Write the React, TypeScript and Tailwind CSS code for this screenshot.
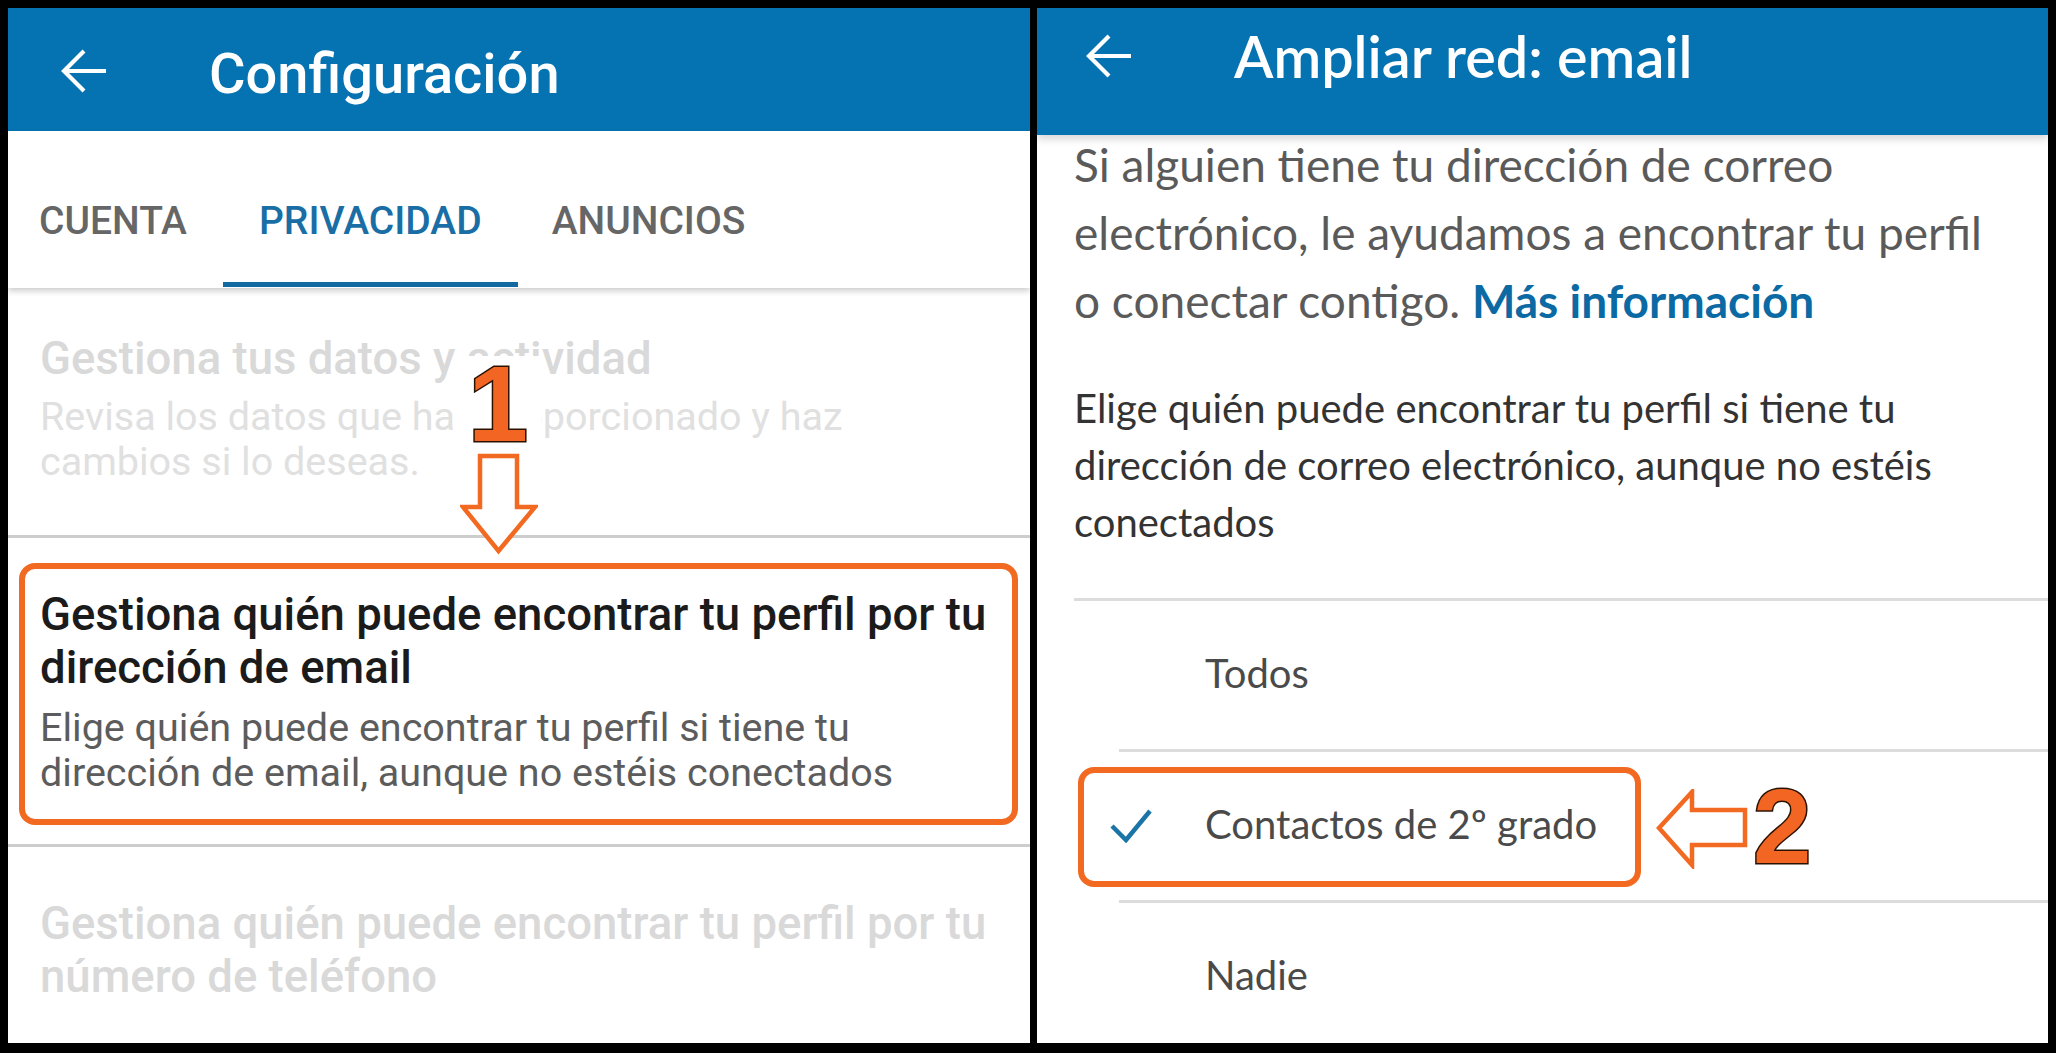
import React from "react";

const BackArrow = () => (
  <svg width="48" height="46" viewBox="0 0 48 46" fill="none" stroke="white" strokeWidth="4.2">
    <path d="M46 23H5" />
    <path d="M24 3L4 23L24 43" strokeLinejoin="miter" />
  </svg>
);

const Check = () => (
  <svg width="42" height="34" viewBox="0 0 42 34" fill="none" stroke="#1a74a8" strokeWidth="4.5" strokeLinecap="butt" strokeLinejoin="miter">
    <path d="M2 17L16 31L40 2" />
  </svg>
);

const DownArrow = () => (
  <svg width="78" height="102" viewBox="0 0 78 102">
    <path d="M20 3H57V54H75L38.5 98L3 54H20Z" fill="white" stroke="#f26a21" strokeWidth="4.5" strokeLinejoin="miter" />
  </svg>
);

const LeftArrow = () => (
  <svg width="92" height="80" viewBox="0 0 92 80">
    <path d="M3 39L36 3V21H89V56H36V76Z" fill="white" stroke="#f26a21" strokeWidth="4.5" strokeLinejoin="miter" />
  </svg>
);

function ConfigPanel() {
  return (
    <div className="w-[1022px] h-full bg-white flex flex-col overflow-hidden font-['Roboto',sans-serif]">
      <div className="h-[123px] bg-[#0573b1] flex items-start pt-[38px] pl-[52px] shrink-0">
        <div className="pt-[2px]">
          <BackArrow />
        </div>
        <span className="ml-[101px] text-[56px] leading-none font-medium text-white whitespace-nowrap">Configuración</span>
      </div>

      <div className="relative z-10 h-[157px] shrink-0 flex bg-white shadow-[0_3px_6px_rgba(0,0,0,0.2)] text-[39px] leading-none font-medium">
        <div className="h-[156px] pt-[71px] pl-[31px] pr-[36px] border-b-[5px] border-transparent text-[#666666]">CUENTA</div>
        <div className="h-[156px] pt-[71px] px-[36px] border-b-[5px] border-[#136aa3] text-[#1a6ea6]">PRIVACIDAD</div>
        <div className="h-[156px] pt-[71px] pl-[34px] border-b-[5px] border-transparent text-[#666666]">ANUNCIOS</div>
      </div>

      <div className="flex flex-col">
        <div className="pl-[32px] pt-[44px] pb-[51px]">
          <div className="text-[45.5px] leading-[53px] font-medium text-[#d9d9d9] whitespace-nowrap">Gestiona tus datos y actividad</div>
          <div className="mt-[9px] text-[39.5px] leading-[45px] text-[#e0e0e0] whitespace-nowrap">
            <div>Revisa los datos que has proporcionado y haz</div>
            <div>cambios si lo deseas.</div>
          </div>
        </div>
        <div className="h-[3px] bg-[#cdcdcd]" />
        <div className="pl-[32px] pt-[50px] pb-[49px]">
          <div className="text-[45.5px] leading-[53px] font-medium text-[#1b1b1b] whitespace-nowrap">
            <div>Gestiona quién puede encontrar tu perfil por tu</div>
            <div>dirección de email</div>
          </div>
          <div className="mt-[11px] text-[39.5px] leading-[45px] text-[#5c5c5c] whitespace-nowrap">
            <div>Elige quién puede encontrar tu perfil si tiene tu</div>
            <div>dirección de email, aunque no estéis conectados</div>
          </div>
        </div>
        <div className="h-[3px] bg-[#cdcdcd]" />
        <div className="pl-[32px] pt-[50px]">
          <div className="text-[45.5px] leading-[53px] font-medium text-[#d9d9d9] whitespace-nowrap">
            <div>Gestiona quién puede encontrar tu perfil por tu</div>
            <div>número de teléfono</div>
          </div>
        </div>
      </div>
    </div>
  );
}

function Option({ label, checked, indentLine }: { label: string; checked?: boolean; indentLine?: boolean }) {
  return (
    <div className="flex flex-col">
      <div className={indentLine ? "h-[3px] bg-[#dcdcdc] ml-[82px]" : "h-[3px] bg-[#dcdcdc] ml-[37px]"} />
      <div className="h-[148px] flex items-center pb-[4px]">
        <div className="w-[168px] pl-[73px] pt-[4px] flex items-center">{checked ? <Check /> : null}</div>
        <span className="text-[40px] leading-none text-[#4a4a4a] whitespace-nowrap">{label}</span>
      </div>
    </div>
  );
}

function EmailPanel() {
  return (
    <div className="w-[1011px] h-full bg-white flex flex-col overflow-hidden font-['Lato',sans-serif]">
      <div className="relative z-10 h-[127px] shrink-0 bg-[#0573b1] flex items-start pl-[48px] shadow-[0_4px_8px_rgba(0,0,0,0.16)]">
        <div className="pt-[25px]">
          <BackArrow />
        </div>
        <span className="ml-[101px] pt-[19px] text-[57.5px] leading-none font-semibold text-white whitespace-nowrap">Ampliar red: email</span>
      </div>

      <div className="-mt-[4px] pl-[37px] text-[46px] leading-[68px] text-[#5a5a5a] whitespace-nowrap">
        <div>Si alguien tiene tu dirección de correo</div>
        <div>electrónico, le ayudamos a encontrar tu perfil</div>
        <div>
          o conectar contigo. <span className="font-bold text-[#0b69a3]">Más información</span>
        </div>
      </div>

      <div className="mt-[45px] pl-[37px] text-[40px] leading-[57px] text-[#333333] whitespace-nowrap">
        <div>Elige quién puede encontrar tu perfil si tiene tu</div>
        <div>dirección de correo electrónico, aunque no estéis</div>
        <div>conectados</div>
      </div>

      <div className="mt-[47px] flex flex-col">
        <Option label="Todos" />
        <Option label="Contactos de 2º grado" checked indentLine />
        <Option label="Nadie" indentLine />
      </div>
    </div>
  );
}

export default function App() {
  return (
    <div className="relative w-[2056px] h-[1053px] bg-black pt-[8px] pl-[8px] pr-[8px] pb-[10px] flex gap-[7px] overflow-hidden">
      <ConfigPanel />
      <EmailPanel />

      {/* step markers */}
      <div className="absolute left-[19px] top-[563px] w-[999px] h-[262px] border-[6px] border-[#f26a21] rounded-[16px]" />
      <div className="absolute left-[455px] top-[356px] w-[86px] h-[86px] bg-white flex items-start justify-center">
        <span className="text-[108px] leading-none font-bold text-[#f26522] font-['Liberation_Sans',sans-serif] [-webkit-text-stroke:3px_#2a1200] [paint-order:stroke_fill] -mt-[6px]">1</span>
      </div>
      <div className="absolute left-[460px] top-[453px]">
        <DownArrow />
      </div>

      <div className="absolute left-[1078px] top-[767px] w-[563px] h-[120px] border-[6px] border-[#f26a21] rounded-[16px]" />
      <div className="absolute left-[1656px] top-[789px]">
        <LeftArrow />
      </div>
      <span className="absolute left-[1753px] top-[774px] text-[105px] leading-none font-bold text-[#f26522] font-['Liberation_Sans',sans-serif] [-webkit-text-stroke:3px_#2a1200] [paint-order:stroke_fill]">2</span>
    </div>
  );
}
